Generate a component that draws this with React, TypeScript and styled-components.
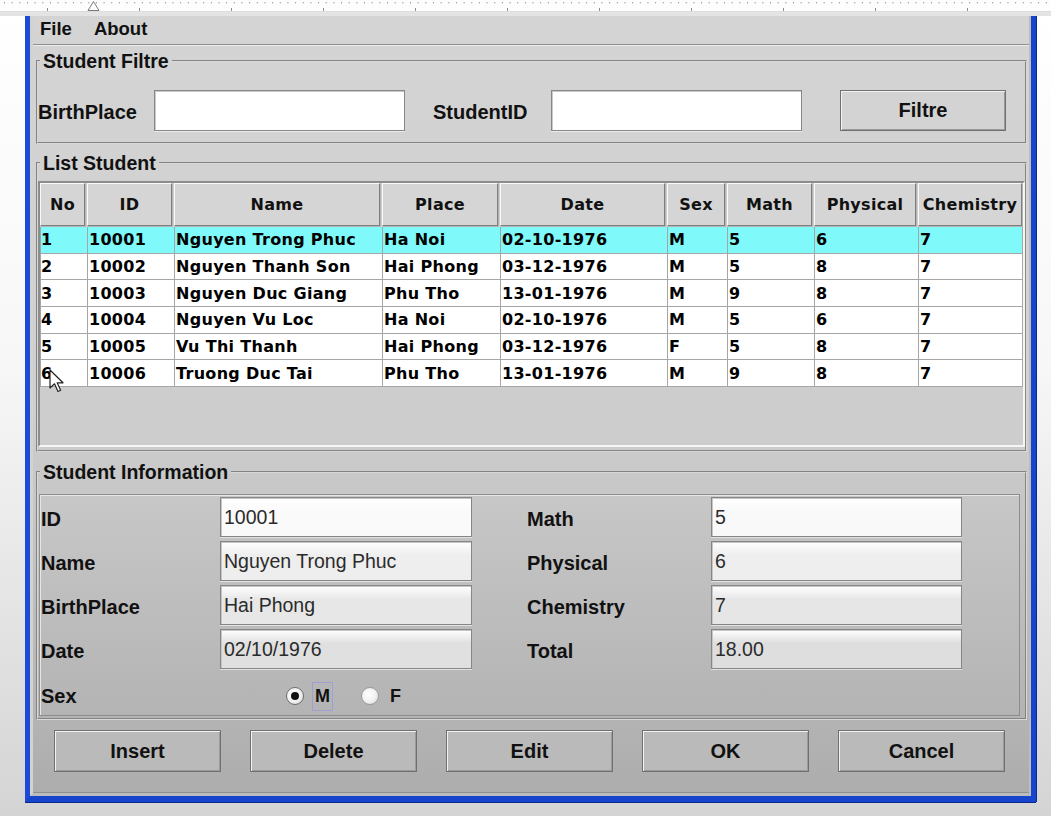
import React from 'react';
import styled, { createGlobalStyle } from 'styled-components';

const GlobalStyle = createGlobalStyle`
  html, body { margin: 0; padding: 0; }
  body {
    width: 1051px;
    height: 816px;
    overflow: hidden;
    background: linear-gradient(180deg, #ffffff 0%, #f7f7f7 45%, #d4d4d4 100%);
    font-family: "Liberation Sans", Arial, sans-serif;
  }
  * { box-sizing: border-box; }
`;

const Page = styled.div`
  width: 1051px;
  height: 816px;
  display: flex;
  flex-direction: column;
`;

const RulerBar = styled.div`
  height: 16px;
  background: #fdfdfd;
  border-bottom: 4px solid #e4e4e4;
  display: flex;
`;

const Window = styled.div`
  position: relative;
  margin-left: 25px;
  width: 1011px;
  height: 786px;
  border-left: 5px solid #1c4bd6;
  border-right: 6px solid #1644cc;
  border-bottom: 6px solid #1644cc;
  box-shadow: 1px 0 0 #0b2a8f, 0 1px 0 #0b2a8f;
  display: flex;
`;

const Frame = styled.div`
  flex: 1;
  display: flex;
  border-left: 3px solid #d2d2d2;
  border-right: 2px solid #bcbcbc;
  border-bottom: 3px solid #bcbcbc;
`;

const Content = styled.div`
  flex: 1;
  display: flex;
  flex-direction: column;
  background: linear-gradient(180deg, #d4d4d4 0%, #cfcfcf 50%, #bcbcbc 78%, #adadad 100%);
  border-bottom: 1px solid #909090;
`;

const MenuBar = styled.div`
  height: 29px;
  display: flex;
  align-items: center;
  gap: 22px;
  padding: 0 0 3px 7px;
  border-bottom: 1px solid #8e8e8e;
  box-shadow: 0 1px 0 #eeeeee;
`;

const MenuItem = styled.span`
  font-size: 18.5px;
  font-weight: bold;
  color: #111;
`;

const Group = styled.fieldset<{ $mt: number; $pt: number; $pb: number }>`
  margin: ${p => p.$mt}px 2px 0 3px;
  padding: ${p => p.$pt}px 0 ${p => p.$pb}px 0;
  border: 2px groove #d8d8d8;
  min-width: 0;
`;

const Legend = styled.legend`
  margin-left: 2px;
  padding: 0 3px;
  font-size: 19.5px;
  line-height: 22px;
  font-weight: bold;
  color: #111;
`;

const FilterRow = styled.div`
  display: grid;
  grid-template-columns: 116px 251px 28px 118px 251px 38px 166px;
  height: 41px;
  align-items: center;
`;

const Label = styled.span`
  padding-top: 4px;
  font-size: 20px;
  font-weight: bold;
  color: #111;
  white-space: nowrap;
`;

const TextBox = styled.div`
  height: 41px;
  background: #ffffff;
  border: 1px solid #878787;
  box-shadow: inset 1px 1px 0 #c9c9c9, 0 1px 0 #ececec;
`;

const Button = styled.div<{ $bg: string; $h: number }>`
  height: ${p => p.$h}px;
  display: flex;
  align-items: center;
  justify-content: center;
  background: ${p => p.$bg};
  border: 1px solid #707070;
  box-shadow: inset 1px 1px 0 #f2f2f2, inset -1px -1px 0 #9a9a9a;
  font-size: 20px;
  font-weight: bold;
  color: #111;
`;

const ScrollPane = styled.div`
  height: 266px;
  border: 2px solid;
  border-color: #8c8c8c #f6f6f6 #f6f6f6 #8c8c8c;
  background: #cdcdcd;
  display: flex;
  flex-direction: column;
`;

const COLS = '47px 87px 208px 118px 167px 60px 87px 104px 104px';

const HeaderRow = styled.div`
  display: grid;
  grid-template-columns: ${COLS};
  height: 43px;
  margin-bottom: 1px;
`;

const HeaderCell = styled.div<{ $last?: boolean }>`
  margin-right: ${p => (p.$last ? 0 : 2)}px;
  display: flex;
  align-items: center;
  justify-content: center;
  background: #d5d5d5;
  border: 1px solid;
  border-color: #fafafa #7e7e7e #7e7e7e #fafafa;
  box-shadow: 1px 1px 0 #b4b4b4;
  font-family: "DejaVu Sans", Verdana, sans-serif;
  font-weight: bold;
  font-size: 16px;
  letter-spacing: 0.3px;
  color: #111;
  white-space: nowrap;
  overflow: hidden;
`;

const Row = styled.div<{ $selected?: boolean }>`
  display: grid;
  grid-template-columns: ${COLS};
  height: 26.7px;
  background: ${p => (p.$selected ? '#7ff9f9' : '#ffffff')};
  border-left: 1px solid #a6a6a6;
`;

const Cell = styled.div<{ $first?: boolean }>`
  display: flex;
  align-items: center;
  padding-left: ${p => (p.$first ? 0 : 1)}px;
  border-right: 1px solid #a6a6a6;
  border-bottom: 1px solid #a6a6a6;
  font-family: "DejaVu Sans", Verdana, sans-serif;
  font-weight: bold;
  font-size: 16px;
  letter-spacing: 0.3px;
  color: #000;
  white-space: nowrap;
  overflow: hidden;
`;

const InfoPanel = styled.div`
  margin: 0 5px 0 1px;
  padding: 2px 0 0 1px;
  height: 222px;
  border: 1px solid #8d8d8d;
  box-shadow: inset 1px 1px 0 #e6e6e6;
  display: grid;
  grid-template-columns: 179px 252px 55px 184px 251px;
  grid-template-rows: 40px 40px 40px 40px 42px;
  row-gap: 4px;
  align-items: center;
`;

const Field = styled.div<{ $bg: string }>`
  height: 40px;
  display: flex;
  align-items: center;
  padding-left: 3px;
  background: linear-gradient(180deg, #ffffff 0%, ${p => p.$bg} 35%, ${p => p.$bg} 100%);
  border: 1px solid #868686;
  box-shadow: inset 1px 1px 0 #c6c6c6, 0 1px 0 #e2e2e2;
  font-size: 19.5px;
  color: #2b2b2b;
`;

const Spacer = styled.div``;

const RadioGroup = styled.div`
  display: flex;
  align-items: center;
  justify-content: center;
  padding-top: 4px;
  padding-right: 2px;
`;

const RadioCircle = styled.span<{ $on?: boolean }>`
  width: 18px;
  height: 18px;
  border-radius: 50%;
  border: 1px solid ${p => (p.$on ? '#6e6e6e' : '#9a9a9a')};
  background: radial-gradient(circle at 40% 40%, #ffffff 0%, #f0f0f0 55%, #cfcfcf 100%);
  display: flex;
  align-items: center;
  justify-content: center;
  &::after {
    content: '';
    width: 8px;
    height: 8px;
    border-radius: 50%;
    background: ${p => (p.$on ? '#111' : 'transparent')};
  }
`;

const RadioText = styled.span<{ $focus?: boolean; $ml: number; $mr: number }>`
  margin-left: ${p => p.$ml}px;
  margin-right: ${p => p.$mr}px;
  height: 29px;
  padding: 0 2px;
  display: flex;
  align-items: center;
  border: 1px solid ${p => (p.$focus ? '#9f9fd6' : 'transparent')};
  font-size: 18px;
  font-weight: bold;
  color: #111;
`;

const ButtonBar = styled.div`
  margin-top: 10px;
  padding-left: 21px;
  display: grid;
  grid-template-columns: repeat(5, 167px);
  column-gap: 29px;
`;

const CursorLayer = styled.div`
  position: absolute;
  left: 19px;
  top: 353px;
  width: 16px;
  height: 26px;
  pointer-events: none;
`;

const Ruler = () => {
  const dots = [];
  for (let x = 4; x < 1051; x += 7.66) dots.push(<rect key={'d' + x} x={x} y={2} width={1} height={1.4} fill="#9a9a9a" />);
  const ticks = [];
  for (let x = 47; x < 1051; x += 92) ticks.push(<rect key={'t' + x} x={x} y={8} width={1} height={3} fill="#8a8a8a" />);
  return (
    <RulerBar>
      <svg width="1051" height="12" viewBox="0 0 1051 12">
        {dots}
        {ticks}
        <line x1="0" y1="11.5" x2="1051" y2="11.5" stroke="#dcdcdc" />
        <path d="M88 10.5 L93.5 1.5 L99 10.5 Z" fill="#ffffff" stroke="#7a7a7a" strokeWidth="1" />
      </svg>
    </RulerBar>
  );
};

const students = [
  ['1', '10001', 'Nguyen Trong Phuc', 'Ha Noi', '02-10-1976', 'M', '5', '6', '7'],
  ['2', '10002', 'Nguyen Thanh Son', 'Hai Phong', '03-12-1976', 'M', '5', '8', '7'],
  ['3', '10003', 'Nguyen Duc Giang', 'Phu Tho', '13-01-1976', 'M', '9', '8', '7'],
  ['4', '10004', 'Nguyen Vu Loc', 'Ha Noi', '02-10-1976', 'M', '5', '6', '7'],
  ['5', '10005', 'Vu Thi Thanh', 'Hai Phong', '03-12-1976', 'F', '5', '8', '7'],
  ['6', '10006', 'Truong Duc Tai', 'Phu Tho', '13-01-1976', 'M', '9', '8', '7'],
];

const headers = ['No', 'ID', 'Name', 'Place', 'Date', 'Sex', 'Math', 'Physical', 'Chemistry'];

const infoRows = [
  ['ID', '10001', '#fafafa', 'Math', '5', '#f9f9f9'],
  ['Name', 'Nguyen Trong Phuc', '#eeeeee', 'Physical', '6', '#eeeeee'],
  ['BirthPlace', 'Hai Phong', '#e7e7e7', 'Chemistry', '7', '#e6e6e6'],
  ['Date', '02/10/1976', '#e0e0e0', 'Total', '18.00', '#dedede'],
];

export default function App() {
  return (
    <Page>
      <GlobalStyle />
      <Ruler />
      <Window>
        <Frame>
          <Content>
            <MenuBar>
              <MenuItem>File</MenuItem>
              <MenuItem>About</MenuItem>
            </MenuBar>

            <Group $mt={5} $pt={18} $pb={11}>
              <Legend>Student Filtre</Legend>
              <FilterRow>
                <Label>BirthPlace</Label>
                <TextBox />
                <Spacer />
                <Label>StudentID</Label>
                <TextBox />
                <Spacer />
                <Button $bg="#d3d3d3" $h={41}>Filtre</Button>
              </FilterRow>
            </Group>

            <Group $mt={8} $pt={7} $pb={3}>
              <Legend>List Student</Legend>
              <ScrollPane>
                <HeaderRow>
                  {headers.map((h, i) => (
                    <HeaderCell key={h} $last={i === headers.length - 1}>{h}</HeaderCell>
                  ))}
                </HeaderRow>
                {students.map((s, r) => (
                  <Row key={s[0]} $selected={r === 0}>
                    {s.map((v, c) => (
                      <Cell key={c} $first={c === 0}>{v}</Cell>
                    ))}
                  </Row>
                ))}
              </ScrollPane>
            </Group>

            <Group $mt={9} $pt={11} $pb={2}>
              <Legend>Student Information</Legend>
              <InfoPanel>
                {infoRows.map(r => (
                  <React.Fragment key={r[0]}>
                    <Label>{r[0]}</Label>
                    <Field $bg={r[2]}>{r[1]}</Field>
                    <Spacer />
                    <Label>{r[3]}</Label>
                    <Field $bg={r[5]}>{r[4]}</Field>
                  </React.Fragment>
                ))}
                <Label>Sex</Label>
                <RadioGroup>
                  <RadioCircle $on />
                  <RadioText $focus $ml={8} $mr={28}>M</RadioText>
                  <RadioCircle />
                  <RadioText $ml={8} $mr={0}>F</RadioText>
                </RadioGroup>
              </InfoPanel>
            </Group>

            <ButtonBar>
              {['Insert', 'Delete', 'Edit', 'OK', 'Cancel'].map(b => (
                <Button key={b} $bg="#bababa" $h={42}>{b}</Button>
              ))}
            </ButtonBar>
          </Content>
        </Frame>
        <CursorLayer>
          <svg width="16" height="26" viewBox="0 0 16 26">
            <path d="M1 1 L1 19 L5.5 14.8 L9 22.5 L11.6 21.3 L8.2 13.8 L14 13.8 Z" fill="#ffffff" stroke="#222" strokeWidth="1.2" strokeLinejoin="round" />
          </svg>
        </CursorLayer>
      </Window>
    </Page>
  );
}
